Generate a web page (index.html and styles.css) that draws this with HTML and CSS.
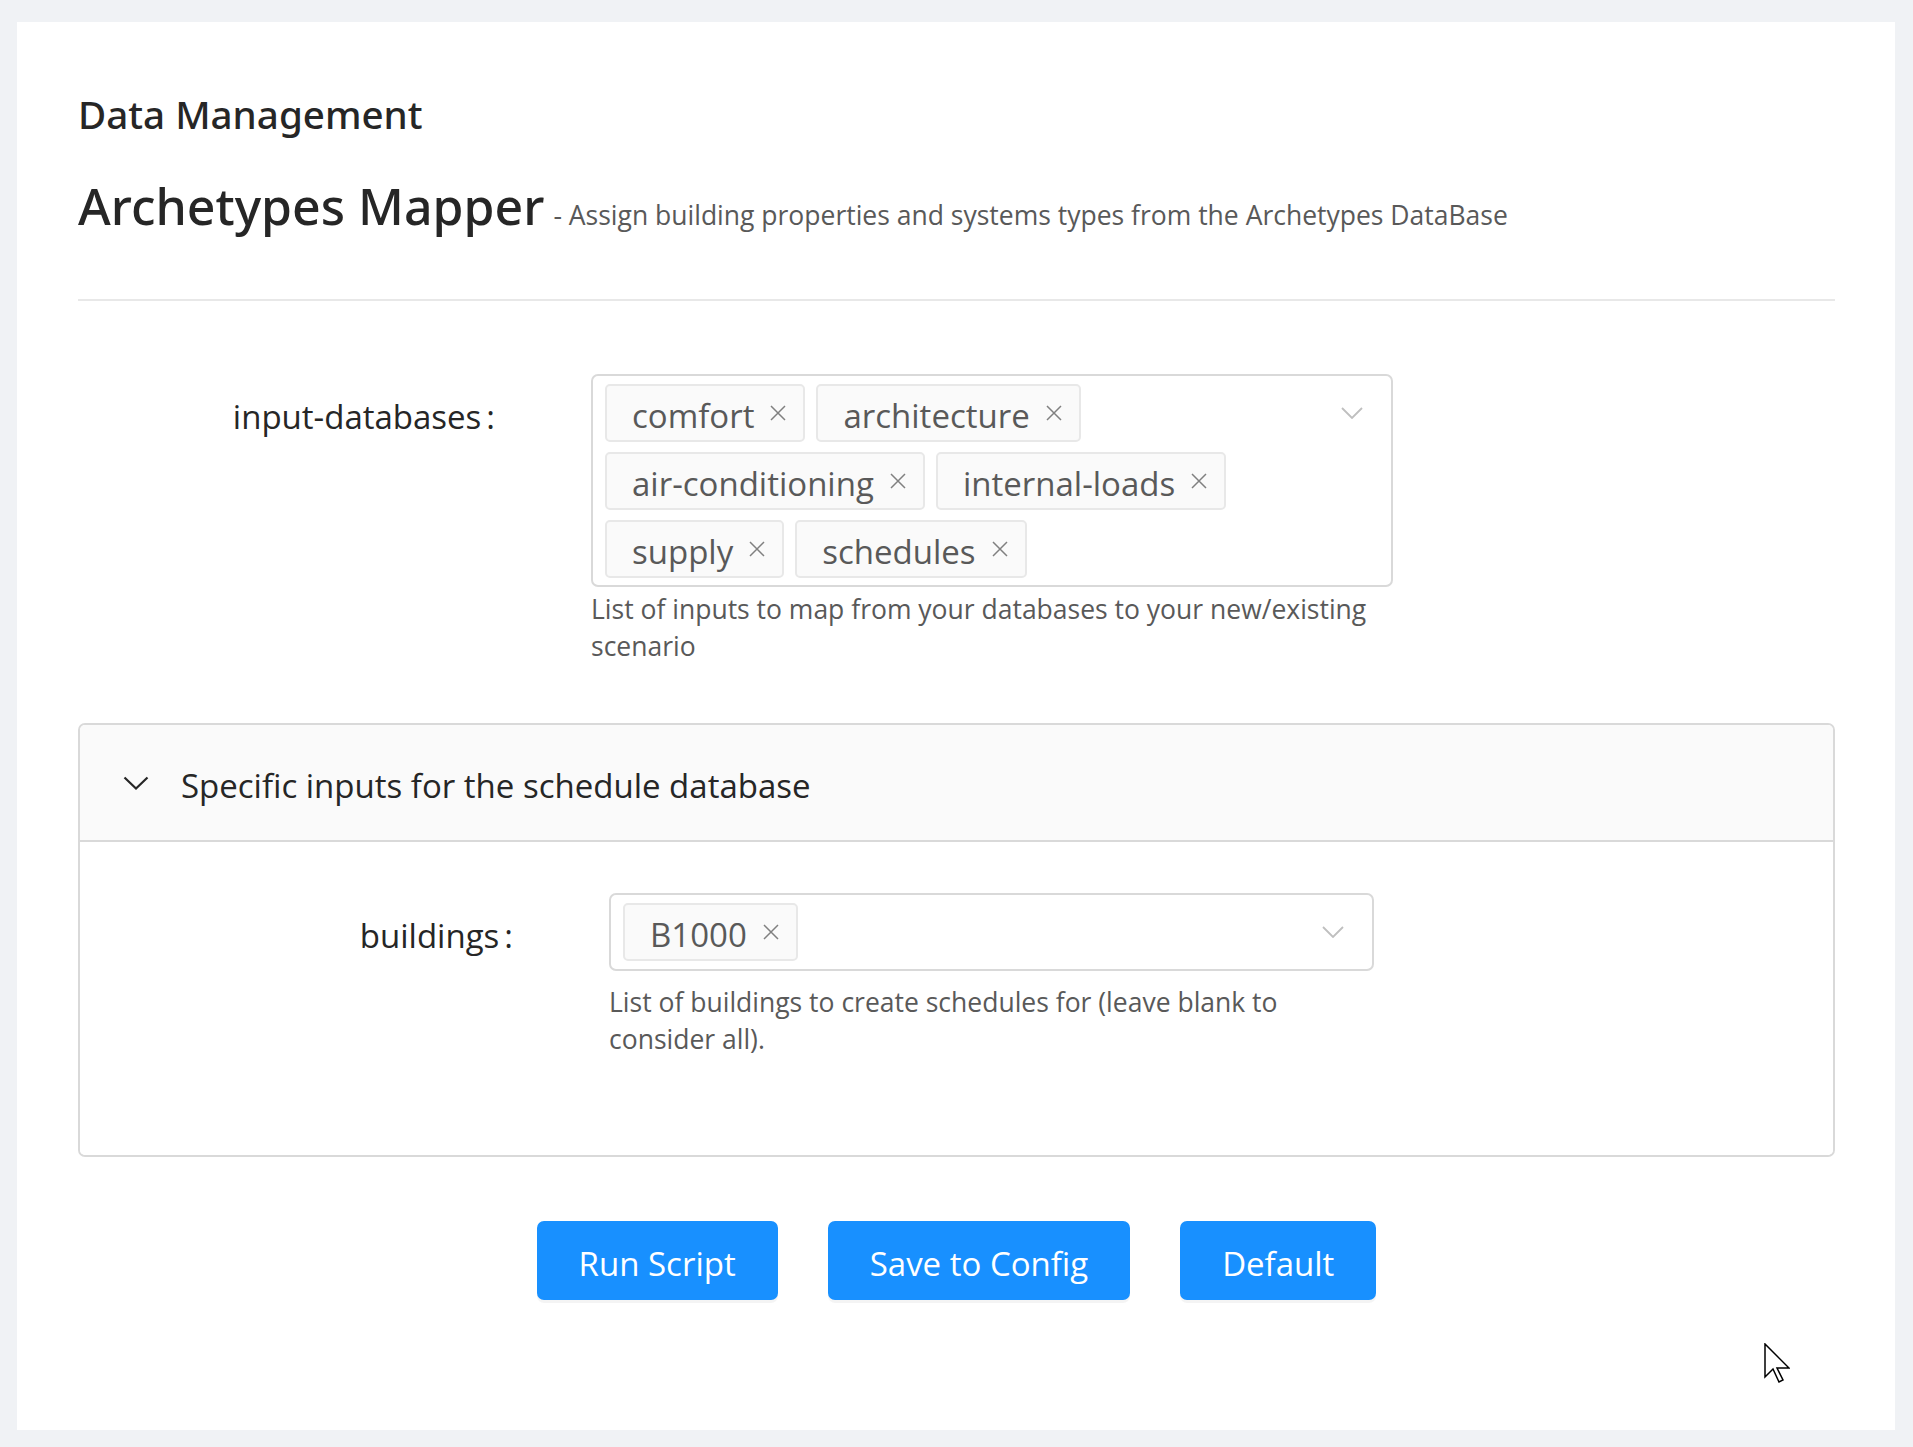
FILE: index.html
```html
<!DOCTYPE html>
<html lang="en">
<head>
<meta charset="utf-8">
<title>Archetypes Mapper</title>
<link rel="stylesheet" href="styles.css">
</head>
<body>
<div class="card">
  <h4 class="section-title">Data Management</h4>
  <div class="tool-title"><span class="tool-name">Archetypes Mapper</span><span class="tool-desc">- Assign building properties and systems types from the Archetypes DataBase</span></div>
  <div class="divider"></div>

  <div class="form-row main-row">
    <label class="form-label">input-databases<span class="colon">:</span></label>
    <div class="form-control">
      <div class="select">
        <div class="tags">
          <span class="tag"><span class="tag-text">comfort</span><svg class="tag-close" viewBox="0 0 16 16"><path d="M1 1L15 15M15 1L1 15"/></svg></span>
          <span class="tag"><span class="tag-text">architecture</span><svg class="tag-close" viewBox="0 0 16 16"><path d="M1 1L15 15M15 1L1 15"/></svg></span>
          <span class="tag"><span class="tag-text">air-conditioning</span><svg class="tag-close" viewBox="0 0 16 16"><path d="M1 1L15 15M15 1L1 15"/></svg></span>
          <span class="tag"><span class="tag-text">internal-loads</span><svg class="tag-close" viewBox="0 0 16 16"><path d="M1 1L15 15M15 1L1 15"/></svg></span>
          <span class="tag"><span class="tag-text">supply</span><svg class="tag-close" viewBox="0 0 16 16"><path d="M1 1L15 15M15 1L1 15"/></svg></span>
          <span class="tag"><span class="tag-text">schedules</span><svg class="tag-close" viewBox="0 0 16 16"><path d="M1 1L15 15M15 1L1 15"/></svg></span>
        </div>
        <svg class="select-arrow" viewBox="0 0 22 12"><path d="M1 1L11 11L21 1"/></svg>
      </div>
      <div class="help help-main">List of inputs to map from your databases to your new/existing scenario</div>
    </div>
  </div>

  <div class="collapse">
    <div class="collapse-header">
      <svg class="collapse-arrow" viewBox="0 0 26 14"><path d="M1.5 1.5L13 12.5L24.5 1.5"/></svg>
      <span class="collapse-title">Specific inputs for the schedule database</span>
    </div>
    <div class="collapse-body">
      <div class="form-row panel-row">
        <label class="form-label">buildings<span class="colon">:</span></label>
        <div class="form-control">
          <div class="select">
            <div class="tags">
              <span class="tag"><span class="tag-text">B1000</span><svg class="tag-close" viewBox="0 0 16 16"><path d="M1 1L15 15M15 1L1 15"/></svg></span>
            </div>
            <svg class="select-arrow" viewBox="0 0 22 12"><path d="M1 1L11 11L21 1"/></svg>
          </div>
          <div class="help help-panel">List of buildings to create schedules for (leave blank to consider all).</div>
        </div>
      </div>
    </div>
  </div>

  <div class="actions">
    <button class="btn"><span class="btn-text">Run Script</span></button>
    <button class="btn"><span class="btn-text">Save to Config</span></button>
    <button class="btn"><span class="btn-text">Default</span></button>
  </div>
</div>
<svg class="cursor" viewBox="0 0 26 40" width="26" height="40"><path d="M1 1L1 34L9 26L15 39L19 37L13 25L25 25Z"/></svg>
</body>
</html>
```

FILE: styles.css
```css
html, body {
  margin: 0;
  padding: 0;
}

body {
  background: #f0f2f5;
  font-family: "Open Sans", "Noto Sans", "Liberation Sans", sans-serif;
  color: #262626;
  position: relative;
  min-height: 100vh;
  box-sizing: border-box;
  padding: 22px 18px 17px 17px;
}

.card {
  background: #ffffff;
  box-sizing: border-box;
  min-height: 1408px;
  padding: 68px 60px 130px 61px;
}

.section-title {
  margin: 0;
  font-family: "Noto Sans", "Open Sans", sans-serif;
  font-size: 38.6px;
  line-height: 48px;
  font-weight: 500;
  color: #262626;
}

.tool-title {
  margin-top: 38px;
  font-size: 50px;
  line-height: 60px;
  white-space: nowrap;
}

.tool-name {
  font-family: "Noto Sans", "Open Sans", sans-serif;
  font-size: 50px;
  font-weight: 500;
  color: #262626;
}

.tool-desc {
  font-size: 26.5px;
  line-height: 1;
  color: #595959;
  margin-left: 9px;
}

.divider {
  margin-top: 63px;
  height: 2px;
  background: #e8e8e8;
}

.form-row {
  display: grid;
  align-items: start;
}

.main-row {
  margin-top: 73px;
  grid-template-columns: 513px 802px;
}

.panel-row {
  grid-template-columns: 529px 765px;
}

.form-label {
  display: block;
  text-align: right;
  padding-right: 96px;
  padding-top: 4px;
  font-size: 33px;
  line-height: 78px;
  color: #262626;
  white-space: nowrap;
}

.colon {
  margin-left: 5px;
}

.select {
  position: relative;
  border: 2px solid #d9d9d9;
  border-radius: 7px;
  background: #ffffff;
  padding: 8px 50px 7px 12px;
}

.panel-row .select {
  padding-bottom: 8px;
}

.tags {
  display: flex;
  flex-wrap: wrap;
  row-gap: 10px;
  column-gap: 11px;
}

.tag {
  display: inline-flex;
  align-items: center;
  height: 58px;
  box-sizing: border-box;
  border: 2px solid #e8e8e8;
  border-radius: 5px;
  background: #fafafa;
  padding: 0 16px 0 25px;
  color: #595959;
  font-size: 33px;
  line-height: 54px;
  white-space: nowrap;
  overflow: hidden;
}

.tag-text {
  margin-top: 6px;
}

.tag-close {
  width: 16px;
  height: 16px;
  margin-left: 16px;
  margin-right: 1px;
  fill: none;
  stroke: #808080;
  stroke-width: 1.5;
}

.select-arrow {
  position: absolute;
  right: 28px;
  top: 31px;
  width: 22px;
  height: 12px;
  fill: none;
  stroke: #bfbfbf;
  stroke-width: 1.8;
}

.help {
  font-size: 26.5px;
  line-height: 36.6px;
  color: #595959;
}

.help-main {
  margin-top: 4px;
}

.help-panel {
  margin-top: 13px;
}

.collapse {
  margin-top: 59px;
  border: 2px solid #d9d9d9;
  border-radius: 7px;
  overflow: hidden;
}

.collapse-header {
  display: flex;
  align-items: center;
  height: 115px;
  padding-left: 43px;
  background: #fafafa;
  border-bottom: 2px solid #d9d9d9;
}

.collapse-arrow {
  width: 26px;
  height: 14px;
  margin-right: 32px;
  fill: none;
  stroke: #262626;
  stroke-width: 2.2;
}

.collapse-title {
  font-size: 33px;
  color: #262626;
  margin-top: 5px;
}

.collapse-body {
  background: #ffffff;
  padding: 51px 0 98px 0;
}

.actions {
  margin-top: 64px;
  display: flex;
  justify-content: center;
  gap: 50px;
}

.btn {
  height: 79px;
  padding: 0 40px;
  border: 2px solid #1890ff;
  border-radius: 7px;
  background: #1890ff;
  color: #ffffff;
  font-family: "Open Sans", "Noto Sans", "Liberation Sans", sans-serif;
  font-size: 33px;
  box-shadow: 0 3px 0 rgba(0, 0, 0, 0.045);
  cursor: pointer;
}

.btn-text {
  display: inline-block;
  padding-top: 5px;
}

.cursor {
  position: absolute;
  left: 1764px;
  top: 1343px;
  fill: #ffffff;
  stroke: #000000;
  stroke-width: 1.5;
  stroke-linejoin: miter;
}
```
